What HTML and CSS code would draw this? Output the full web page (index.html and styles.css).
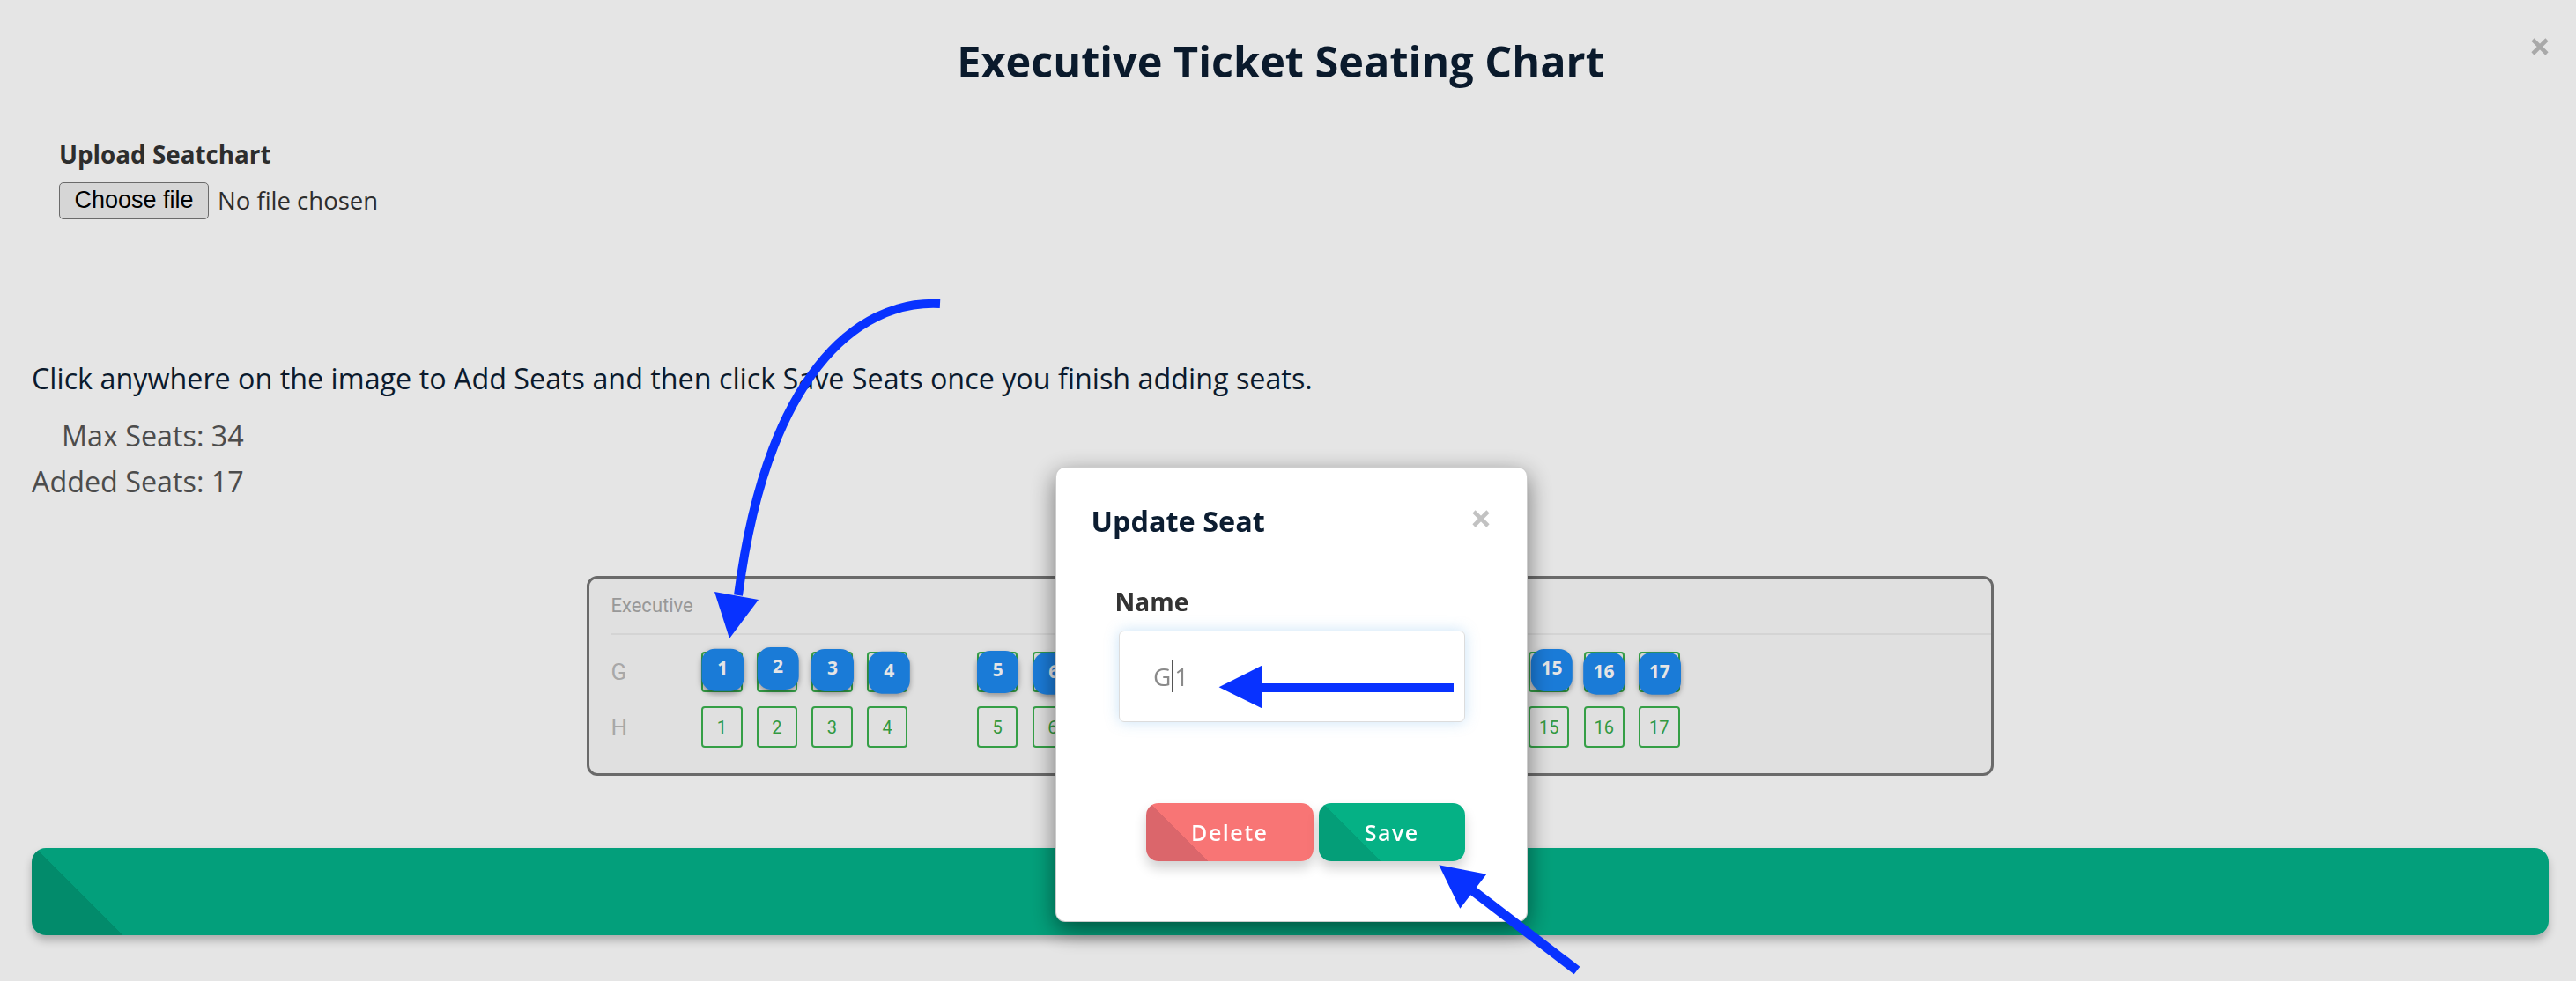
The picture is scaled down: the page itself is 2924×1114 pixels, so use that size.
FILE: index.html
```html
<!DOCTYPE html>
<html lang="en">
<head>
<meta charset="utf-8">
<title>Executive Ticket Seating Chart</title>
<link rel="stylesheet" href="styles.css">
</head>
<body>
<div class="page">
  <header class="page-head">
    <h1 class="page-title">Executive Ticket Seating Chart</h1>
    <button class="x-btn page-close" aria-label="Close">
      <svg viewBox="0 0 20 20" width="20" height="20"><path d="M2 2 L18 18 M18 2 L2 18" /></svg>
    </button>
  </header>

  <section class="upload">
    <div class="upload-label">Upload Seatchart</div>
    <div class="file-row">
      <button class="file-btn">Choose file</button>
      <span class="file-name">No file chosen</span>
    </div>
  </section>

  <p class="hint">Click anywhere on the image to Add Seats and then click Save Seats once you finish adding seats.</p>

  <div class="counts">
    <div>Max Seats: 34</div>
    <div>Added Seats: 17</div>
  </div>

  <div class="chart">
    <div class="chart-head">Executive</div>
    <div class="seat-row">
      <div class="row-label">G</div>
      <div class="seats">
        <div class="seat"><span class="marker" style="--dx:0.5px;--dy:-3.3px">1</span></div>
        <div class="seat"><span class="marker" style="--dx:0.7px;--dy:-5px">2</span></div>
        <div class="seat"><span class="marker" style="--dx:0px;--dy:-3px">3</span></div>
        <div class="seat"><span class="marker" style="--dx:1.8px;--dy:-0.3px">4</span></div>
        <div class="aisle"></div>
        <div class="seat"><span class="marker" style="--dx:0px;--dy:-1px">5</span></div>
        <div class="seat"><span class="marker" style="--dx:1px;--dy:0.7px">6</span></div>
        <div class="seat"><span class="marker" style="--dx:0px;--dy:-2px">7</span></div>
        <div class="seat"><span class="marker" style="--dx:1px;--dy:-1px">8</span></div>
        <div class="seat"><span class="marker" style="--dx:0px;--dy:0px">9</span></div>
        <div class="seat"><span class="marker" style="--dx:-1px;--dy:-2px">10</span></div>
        <div class="seat"><span class="marker" style="--dx:1px;--dy:-3px">11</span></div>
        <div class="seat"><span class="marker" style="--dx:0px;--dy:1px">12</span></div>
        <div class="seat"><span class="marker" style="--dx:0px;--dy:-2px">13</span></div>
        <div class="seat"><span class="marker" style="--dx:1px;--dy:0px">14</span></div>
        <div class="seat"><span class="marker" style="--dx:2.8px;--dy:-3px">15</span></div>
        <div class="seat"><span class="marker" style="--dx:-0.8px;--dy:0.7px">16</span></div>
        <div class="seat"><span class="marker" style="--dx:0px;--dy:0.7px">17</span></div>
      </div>
    </div>
    <div class="seat-row">
      <div class="row-label">H</div>
      <div class="seats">
        <div class="seat">1</div>
        <div class="seat">2</div>
        <div class="seat">3</div>
        <div class="seat">4</div>
        <div class="aisle"></div>
        <div class="seat">5</div>
        <div class="seat">6</div>
        <div class="seat">7</div>
        <div class="seat">8</div>
        <div class="seat">9</div>
        <div class="seat">10</div>
        <div class="seat">11</div>
        <div class="seat">12</div>
        <div class="seat">13</div>
        <div class="seat">14</div>
        <div class="seat">15</div>
        <div class="seat">16</div>
        <div class="seat">17</div>
      </div>
    </div>
  </div>

  <div class="save-bar"></div>
</div>

<div class="backdrop"></div>

<div class="modal-layer">
  <div class="modal">
    <div class="modal-header">
      <h4 class="modal-title">Update Seat</h4>
      <button class="x-btn modal-close" aria-label="Close">
        <svg viewBox="0 0 20 20" width="20" height="20"><path d="M2 2 L18 18 M18 2 L2 18" /></svg>
      </button>
    </div>
    <div class="modal-body">
      <label class="field-label">Name</label>
      <div class="input">G<span class="caret"></span>1</div>
    </div>
    <div class="modal-footer">
      <button class="btn btn-delete">Delete</button>
      <button class="btn btn-save">Save</button>
    </div>
  </div>
</div>

<svg class="annot" viewBox="0 0 2924 1114" width="2924" height="1114">
  <path class="annot-line" d="M1067,345 C970,340 870,430 838,676" />
  <polygon class="annot-head" points="811,672 861,681 828,725" />
  <path class="annot-line" d="M1650,781 L1430,781" />
  <polygon class="annot-head" points="1383.6,780.3 1432.7,755.6 1432.7,804.6" />
  <path class="annot-line thick" d="M1790,1102 L1670,1010" />
  <polygon class="annot-head" points="1633.3,982.3 1687.3,992.7 1657.3,1031.7" />
</svg>
</body>
</html>
```

FILE: styles.css
```css
* { box-sizing: border-box; }

html, body { margin: 0; padding: 0; }

body {
  width: 2924px;
  height: 1114px;
  overflow: hidden;
  background: #ffffff;
  font-family: "Open Sans", "Noto Sans", sans-serif;
  color: #0d1e33;
  position: relative;
}

.page {
  padding: 39px 31px 0 36px;
}

/* header */
.page-head {
  position: relative;
  display: flex;
  justify-content: center;
  padding-right: 22px;
}

.page-title {
  margin: 0;
  font-size: 48.6px;
  line-height: 60px;
  font-weight: 700;
  color: #0c1d31;
}

.x-btn {
  border: 0;
  background: transparent;
  padding: 0;
  width: 20px;
  height: 20px;
  display: block;
}

.x-btn svg path {
  stroke-width: 4.6;
  fill: none;
}

.page-close {
  position: absolute;
  right: 0;
  top: 4px;
}

.page-close svg path { stroke: #bdbdbd; }

/* upload */
.upload {
  margin-top: 57.5px;
  padding-left: 31px;
}

.upload-label {
  font-size: 27.8px;
  line-height: 36px;
  font-weight: 700;
  color: #333333;
}

.file-row {
  margin-top: 14px;
  display: flex;
  align-items: center;
  gap: 10px;
}

.file-btn {
  width: 170px;
  height: 42px;
  padding: 0;
  border: 1.5px solid #767676;
  border-radius: 5px;
  background: #efefef;
  color: #000;
  font-family: "Liberation Sans", Arial, sans-serif;
  font-size: 27px;
}

.file-name {
  font-size: 27.5px;
  color: #333333;
}

/* hint */
.hint {
  margin: 160.2px 0 0;
  font-size: 32.3px;
  line-height: 40px;
  color: #0d1e33;
}

.counts {
  margin-top: 19.3px;
  width: max-content;
  display: flex;
  flex-direction: column;
  align-items: flex-end;
  font-size: 32.3px;
  line-height: 52px;
  color: #555555;
}

/* chart */
.chart {
  margin: 82.5px auto 0;
  width: 1597px;
  border: 3.5px solid #777777;
  border-radius: 12px;
  background: #fafafa;
  padding: 18px 0 29px 24.5px;
}

.chart-head {
  font-family: Roboto, "Liberation Sans", sans-serif;
  font-size: 22px;
  line-height: 26px;
  color: #aaaaaa;
  padding-bottom: 18px;
  border-bottom: 2px solid #ececec;
}

.seat-row {
  display: flex;
  align-items: center;
  margin-top: 16px;
}

.chart-head + .seat-row { margin-top: 18.5px; }

.row-label {
  width: 102.5px;
  font-family: Roboto, "Liberation Sans", sans-serif;
  font-size: 26px;
  color: #bbbbbb;
}

.seats {
  display: flex;
  gap: 16.1px;
}

.seat, .aisle {
  width: 46.5px;
  height: 46.5px;
  flex: none;
}

.seat {
  position: relative;
  border: 2px solid #3bb24f;
  border-radius: 4px;
  display: flex;
  align-items: center;
  justify-content: center;
  font-family: Roboto, "Liberation Sans", sans-serif;
  font-size: 20px;
  color: #38ab48;
}

.marker {
  position: absolute;
  left: -2px;
  top: -2px;
  width: 47.5px;
  height: 48px;
  translate: var(--dx) var(--dy);
  border-radius: 15px;
  background: #1e89f0;
  color: #ffffff;
  font-family: "Open Sans", sans-serif;
  font-weight: 700;
  font-size: 21px;
  display: flex;
  align-items: center;
  justify-content: center;
  padding-bottom: 5px;
  box-shadow: 0 3px 6px rgba(0, 0, 0, 0.35);
}

/* bar */
.save-bar {
  margin-top: 82px;
  height: 99px;
  border-radius: 16px;
  background: linear-gradient(45deg, #039b78 73.5px, #04b289 73.5px);
  box-shadow: 0 6px 10px rgba(0, 0, 0, 0.25);
}

/* overlay + modal */
.backdrop {
  position: fixed;
  inset: 0;
  background: rgba(0, 0, 0, 0.1);
}

.modal-layer {
  position: fixed;
  inset: 0;
  display: flex;
  justify-content: center;
  align-items: flex-start;
  padding-top: 529.5px;
  padding-left: 7px;
}

.modal {
  width: 536px;
  background: #ffffff;
  border: 1px solid rgba(0, 0, 0, 0.2);
  border-radius: 11px;
  box-shadow: 0 9px 28px rgba(0, 0, 0, 0.5);
}

.modal-header {
  display: flex;
  justify-content: space-between;
  align-items: flex-start;
  padding: 37.3px 42px 0 40px;
}

.modal-title {
  margin: 0;
  font-size: 32.4px;
  line-height: 46px;
  font-weight: 700;
  color: #0c1d31;
}

.modal-close {
  margin-top: 11px;
}

.modal-close svg path { stroke: #c2c2c2; }

.modal-body {
  padding: 50.3px 70px 0 71px;
}

.field-label {
  display: block;
  margin-left: -4px;
  font-size: 28px;
  line-height: 38px;
  font-weight: 700;
  color: #333333;
}

.input {
  margin-top: 13.9px;
  height: 104px;
  border: 1.5px solid #dcdcdc;
  border-radius: 6px;
  box-shadow: 0 0 16px rgba(102, 175, 233, 0.35);
  padding-left: 38.5px;
  display: flex;
  align-items: center;
  font-size: 28px;
  color: #8a8a8a;
}

.caret {
  display: inline-block;
  width: 2px;
  height: 37px;
  background: #555555;
  margin: 0 1px;
}

.modal-footer {
  display: flex;
  justify-content: flex-end;
  gap: 6.5px;
  padding: 92px 70px 68px;
}

.btn {
  height: 66px;
  border: 0;
  border-radius: 14px;
  color: #ffffff;
  font-family: "Open Sans", sans-serif;
  font-weight: 600;
  font-size: 25px;
  letter-spacing: 1.5px;
  box-shadow: 0 8px 14px rgba(0, 0, 0, 0.18);
  padding: 0;
}

.btn-delete {
  width: 189.4px;
  background: linear-gradient(45deg, #db666b 50px, #f87575 50px);
}

.btn-save {
  width: 165.5px;
  background: linear-gradient(45deg, #049e78 49.5px, #05b185 49.5px);
}

/* annotations */
.annot {
  position: absolute;
  left: 0;
  top: 0;
  pointer-events: none;
}

.annot-line {
  fill: none;
  stroke: #0832ff;
  stroke-width: 10;
}

.annot-line.thick { stroke-width: 11; }

.annot-head { fill: #0832ff; }
```
